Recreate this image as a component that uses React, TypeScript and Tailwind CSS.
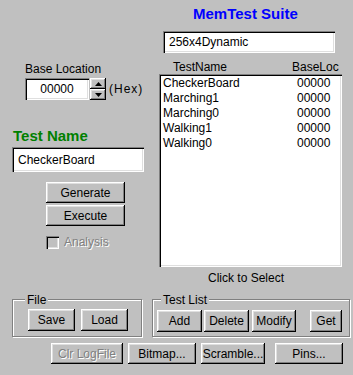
import React from 'react'

const raised =
  'bg-[#c0c0c0] shadow-[inset_-1px_-1px_0_#000,inset_1px_1px_0_#fff,inset_-2px_-2px_0_#808080,inset_2px_2px_0_#dfdfdf]'
const sunken =
  'bg-white shadow-[inset_1px_1px_0_#808080,inset_2px_2px_0_#000,inset_-1px_-1px_0_#fff,inset_-2px_-2px_0_#dfdfdf]'
const etched = 'border border-[#808080] shadow-[inset_1px_1px_0_#fff,1px_1px_0_#fff]'
const disabledText = 'text-[#808080] [text-shadow:1px_1px_0_#fff]'

const tests = ['CheckerBoard', 'Marching1', 'Marching0', 'Walking1', 'Walking0']

function Btn({ label, className, disabled }: { label: string; className: string; disabled?: boolean }) {
  return (
    <div className={`flex shrink-0 items-center justify-center leading-none ${raised} ${disabled ? disabledText : ''} ${className}`}>
      {label}
    </div>
  )
}

function Arrow({ up }: { up?: boolean }) {
  return (
    <div className={`flex h-[11px] w-full items-center justify-center ${raised}`}>
      <svg width="7" height="4" viewBox="0 0 7 4">
        {up ? <polygon points="3.5,0 7,4 0,4" fill="#000" /> : <polygon points="0,0 7,0 3.5,4" fill="#000" />}
      </svg>
    </div>
  )
}

export default function App() {
  return (
    <div className="flex h-[375px] w-[353px] flex-col overflow-hidden bg-[#c0c0c0] font-['Liberation_Sans',Arial,sans-serif] text-[12px] text-black">
      <div className="flex">
        {/* left column */}
        <div className="flex w-[159px] shrink-0 flex-col">
          <div className="ml-[25px] mt-[62px] leading-[14px]">Base Location</div>
          <div className="mt-[2px] flex items-center">
            <div className={`ml-[25px] flex h-[22px] w-[64px] items-center justify-center ${sunken}`}>00000</div>
            <div className="ml-[1px] flex w-[16px] flex-col">
              <Arrow up />
              <Arrow />
            </div>
            <span className="ml-[3px] tracking-[1px]">(Hex)</span>
          </div>
          <div className="ml-[13px] mt-[27px] text-[15px] font-bold leading-[17px] text-[#008000]">Test Name</div>
          <div className={`ml-[12px] mt-[3px] flex h-[25px] w-[132px] items-center pl-[6px] ${sunken}`}>CheckerBoard</div>
          <Btn label="Generate" className="ml-[46px] mt-[10px] h-[21px] w-[79px]" />
          <Btn label="Execute" className="ml-[46px] mt-[2px] h-[21px] w-[79px]" />
          <div className="ml-[46px] mt-[10px] flex items-center">
            <div className="h-[13px] w-[13px] bg-[#c0c0c0] shadow-[inset_1px_1px_0_#808080,inset_2px_2px_0_#000,inset_-1px_-1px_0_#fff,inset_-2px_-2px_0_#dfdfdf]" />
            <span className={`ml-[5px] leading-[13px] ${disabledText}`}>Analysis</span>
          </div>
        </div>

        {/* right column */}
        <div className="flex w-[184px] shrink-0 flex-col">
          <div className="ml-[34px] mt-[5px] text-[15px] font-bold leading-[17px] text-[#0000ff]">MemTest Suite</div>
          <div className={`ml-[4px] mt-[9px] flex h-[22px] w-[172px] items-center pl-[6px] ${sunken}`}>256x4Dynamic</div>
          <div className="mt-[7px] flex leading-[14px]">
            <span className="ml-[14px] w-[119px]">TestName</span>
            <span>BaseLoc</span>
          </div>
          <div className={`flex h-[193px] w-[183px] flex-col pt-[2px] ${sunken}`}>
            {tests.map((t) => (
              <div key={t} className="flex leading-[15px]">
                <span className="ml-[4px] w-[134px]">{t}</span>
                <span>00000</span>
              </div>
            ))}
          </div>
          <div className="ml-[49px] mt-[4px] leading-[14px]">Click to Select</div>
        </div>
      </div>

      {/* group boxes */}
      <div className="mt-[14px] flex">
        <div className={`ml-[12px] h-[38px] w-[130px] ${etched}`}>
          <div className="-mt-[7px] ml-[12px] w-fit bg-[#c0c0c0] px-[2px] leading-[14px]">File</div>
          <div className="mt-[2px] flex">
            <Btn label="Save" className="ml-[15px] h-[22px] w-[47px]" />
            <Btn label="Load" className="ml-[6px] h-[22px] w-[47px]" />
          </div>
        </div>
        <div className={`ml-[10px] h-[38px] w-[198px] ${etched}`}>
          <div className="-mt-[7px] ml-[8px] w-fit bg-[#c0c0c0] px-[2px] leading-[14px]">Test List</div>
          <div className="mt-[3px] flex">
            <Btn label="Add" className="ml-[4px] h-[22px] w-[45px]" />
            <Btn label="Delete" className="ml-[2px] h-[22px] w-[45px]" />
            <Btn label="Modify" className="ml-[3px] h-[22px] w-[44px]" />
            <Btn label="Get" className="ml-[14px] h-[22px] w-[32px]" />
          </div>
        </div>
      </div>

      {/* bottom buttons */}
      <div className="mt-[6px] flex">
        <Btn label="Clr LogFile" disabled className="ml-[51px] h-[21px] w-[72px]" />
        <Btn label="Bitmap..." className="ml-[5px] h-[21px] w-[68px]" />
        <Btn label="Scramble..." className="ml-[5px] h-[21px] w-[64px]" />
        <Btn label="Pins..." className="ml-[10px] h-[21px] w-[68px]" />
      </div>
    </div>
  )
}
